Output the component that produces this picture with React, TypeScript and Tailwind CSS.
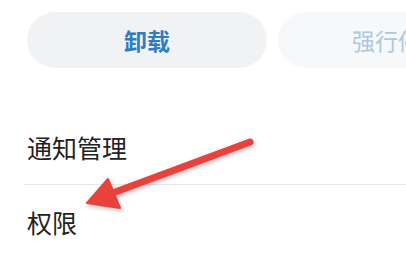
import React from "react";

// App info fragment: action buttons + settings rows, with an annotation arrow on top

const font = { fontFamily: '"Noto Sans CJK SC", "Noto Sans", sans-serif' };

function PillButton({ label, muted }: { label: string; muted?: boolean }) {
  return (
    <div
      className={
        "flex h-[56px] w-[240px] shrink-0 items-center justify-center rounded-full " +
        (muted ? "bg-[#f7f8fa]" : "bg-[#f1f2f4]")
      }
    >
      <span
        className={
          "text-[23px] leading-none " +
          (muted ? "font-normal text-[#adc9df]" : "font-bold text-[#2f7cbf]")
        }
      >
        {label}
      </span>
    </div>
  );
}

function Row({ label }: { label: string }) {
  return (
    <div className="flex h-[74px] items-center pl-[27px]">
      <span className="text-[25px] leading-none text-[#222222]">{label}</span>
    </div>
  );
}

export default function App() {
  return (
    <div className="relative h-[254px] w-[406px] overflow-hidden bg-white" style={font}>
      <div className="flex gap-[11px] pl-[27px] pt-[12px]">
        <PillButton label="卸载" />
        <PillButton label="强行停止" muted />
      </div>

      <div className="mt-[42px]">
        <Row label="通知管理" />
        <div className="ml-[24px] h-px bg-[#e6e6e6]" />
        <Row label="权限" />
      </div>

      {/* annotation arrow */}
      <svg
        className="pointer-events-none absolute left-0 top-0"
        width="406"
        height="254"
        viewBox="0 0 406 254"
        style={{ filter: "drop-shadow(1px 2px 2px rgba(0,0,0,0.25))" }}
      >
        <line x1="250" y1="142" x2="110" y2="194" stroke="#e8423d" strokeWidth="7" strokeLinecap="round" />
        <polygon points="87,203 108,179 120,208" fill="#e8423d" stroke="#e8423d" strokeWidth="2" strokeLinejoin="round" />
      </svg>
    </div>
  );
}
